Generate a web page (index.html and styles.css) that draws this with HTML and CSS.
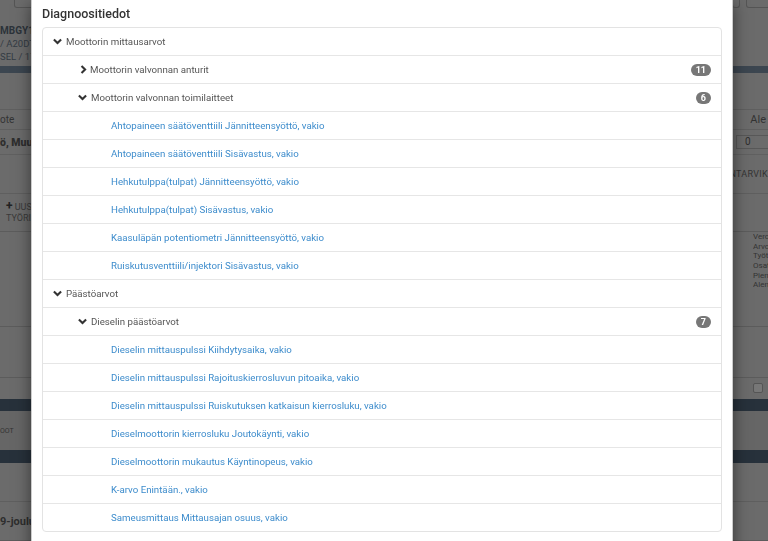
FILE: index.html
```html
<!DOCTYPE html>
<html lang="fi">
<head>
<meta charset="utf-8">
<title>Diagnoositiedot</title>
<link rel="stylesheet" href="styles.css">
</head>
<body>
<div class="page">
  <div class="prow r-top"><span class="box box-l"></span><span class="boxes"><span class="box box-r1"></span><span class="box box-r2"></span></span></div>
  <div class="prow r-info"><div class="info"><b>MBGY1A</b><span>/ A20DT</span><span>SEL / 173</span></div></div>
  <div class="band"></div>
  <div class="prow r-gap"></div>
  <div class="prow r-head"><span>ote</span><span class="rt">Ale</span></div>
  <div class="prow r-val"><b>ö, Muu</b><span class="inp">0</span></div>
  <div class="prow r-mid"><span></span><span class="rt2">NTARVIK</span></div>
  <div class="prow r-btn"><span class="btn"><b>+</b> UUS<br>TYÖRI</span><span></span></div>
  <div class="prow r-sum"><span></span><span class="sum">Vero<br>Arvo<br>Työt<br>Osat<br>Pien<br>Alen</span></div>
  <div class="prow r-emp"></div>
  <div class="prow r-chk"><span></span><span class="chk"></span></div>
  <div class="band band2"></div>
  <div class="prow r-oot"><span class="small">OOT</span></div>
  <div class="band band3"></div>
  <div class="prow r-emp2"></div>
  <div class="prow r-date"><b>9-joulu</b></div>
</div>

<div class="modal">
  <h4 class="title">Diagnoositiedot</h4>
  <ul class="tree">
    <li class="row lvl1"><span class="chev down"><svg viewBox="0 0 10 7" width="9" height="7"><path d="M1 1.2 L5 5.2 L9 1.2" fill="none" stroke="#333" stroke-width="2.3"/></svg></span>Moottorin mittausarvot</li>
    <li class="row lvl2"><span class="chev right"><svg viewBox="0 0 7 10" width="7" height="9"><path d="M1.3 1 L5.3 5 L1.3 9" fill="none" stroke="#333" stroke-width="2.3"/></svg></span>Moottorin valvonnan anturit<span class="badge">11</span></li>
    <li class="row lvl2"><span class="chev down"><svg viewBox="0 0 10 7" width="9" height="7"><path d="M1 1.2 L5 5.2 L9 1.2" fill="none" stroke="#333" stroke-width="2.3"/></svg></span>Moottorin valvonnan toimilaitteet<span class="badge">6</span></li>
    <li class="row lvl3"><a href="#">Ahtopaineen säätöventtiili Jännitteensyöttö, vakio</a></li>
    <li class="row lvl3"><a href="#">Ahtopaineen säätöventtiili Sisävastus, vakio</a></li>
    <li class="row lvl3"><a href="#">Hehkutulppa(tulpat) Jännitteensyöttö, vakio</a></li>
    <li class="row lvl3"><a href="#">Hehkutulppa(tulpat) Sisävastus, vakio</a></li>
    <li class="row lvl3"><a href="#">Kaasuläpän potentiometri Jännitteensyöttö, vakio</a></li>
    <li class="row lvl3"><a href="#">Ruiskutusventtiili/injektori Sisävastus, vakio</a></li>
    <li class="row lvl1"><span class="chev down"><svg viewBox="0 0 10 7" width="9" height="7"><path d="M1 1.2 L5 5.2 L9 1.2" fill="none" stroke="#333" stroke-width="2.3"/></svg></span>Päästöarvot</li>
    <li class="row lvl2"><span class="chev down"><svg viewBox="0 0 10 7" width="9" height="7"><path d="M1 1.2 L5 5.2 L9 1.2" fill="none" stroke="#333" stroke-width="2.3"/></svg></span>Dieselin päästöarvot<span class="badge">7</span></li>
    <li class="row lvl3"><a href="#">Dieselin mittauspulssi Kiihdytysaika, vakio</a></li>
    <li class="row lvl3"><a href="#">Dieselin mittauspulssi Rajoituskierrosluvun pitoaika, vakio</a></li>
    <li class="row lvl3"><a href="#">Dieselin mittauspulssi Ruiskutuksen katkaisun kierrosluku, vakio</a></li>
    <li class="row lvl3"><a href="#">Dieselmoottorin kierrosluku Joutokäynti, vakio</a></li>
    <li class="row lvl3"><a href="#">Dieselmoottorin mukautus Käyntinopeus, vakio</a></li>
    <li class="row lvl3"><a href="#">K-arvo Enintään., vakio</a></li>
    <li class="row lvl3"><a href="#">Sameusmittaus Mittausajan osuus, vakio</a></li>
  </ul>
</div>
</body>
</html>
```

FILE: styles.css
```css
html, body {
  margin: 0;
  padding: 0;
  height: 100%;
  overflow: hidden;
}
body {
  background: #6b6b6b;
  font-family: Roboto, "Liberation Sans", Arial, sans-serif;
  color: #2e2e2e;
}
.page {
  width: 768px;
  height: 541px;
  display: flex;
  flex-direction: column;
  overflow: hidden;
}
.prow {
  display: flex;
  justify-content: space-between;
  align-items: center;
  font-size: 10px;
  border-bottom: 1px solid #5f5f5f;
}
.rt { white-space: nowrap; margin-right: 0; }
.rt2 { white-space: nowrap; margin-right: 0; font-size: 9px; color: #333; letter-spacing: 0.3px; }
.r-top { height: 9px; align-items: flex-start; border-bottom: none; }
.box { display: block; border: 1px solid #555; border-top: none; border-radius: 0 0 3px 3px; height: 7px; }
.box-l { width: 18px; margin-left: 14px; }
.boxes { display: flex; gap: 6px; }
.box-r1 { width: 6px; }
.box-r2 { width: 22px; margin-right: -2px; }
.r-info { height: 57px; align-items: flex-start; border-bottom: none; }
.info { display: flex; flex-direction: column; line-height: 13px; padding-top: 15px; color: #333b44; font-size: 9.5px; }
.info b { font-size: 10px; color: #2c333a; }
.band {
  height: 7px;
  background: #3c4650 radial-gradient(#4d5862 0.5px, transparent 0.7px) 0 0 / 4px 4px;
  flex: none;
}
.r-gap { height: 37px; }
.r-head { height: 19px; font-size: 10px; color: #333; }
.r-head .rt { font-size: 11px; margin-right: 2px; }
.r-val { height: 24px; font-weight: bold; font-size: 10.5px; border-bottom: 1px solid #606060; }
.inp { border: 1px solid #585858; width: 30px; height: 12px; margin-right: -8px; font-weight: normal; font-size: 10px; padding-left: 8px; line-height: 12px; }
.r-mid { height: 38px; }
.r-btn { height: 37px; font-size: 9px; border-bottom: 1px solid #5c5c5c; }
.btn { line-height: 11px; margin-left: 6px; color: #3a3a3a; white-space: nowrap; }
.btn b { font-size: 12px; color: #222; }
.r-sum { height: 95px; align-items: flex-end; border-bottom: 1px solid #5c5c5c; }
.sum { font-size: 8px; line-height: 9.7px; padding-bottom: 36px; width: 15px; overflow: hidden; color: #333; white-space: nowrap; }
.r-emp { height: 50px; border-bottom: 1px solid #5c5c5c; }
.r-chk { height: 21px; border-bottom: none; }
.chk { width: 8px; height: 8px; border: 1px solid #555; border-radius: 2px; background: #777; margin-right: 5px; }
.band2 { height: 12px; background: #27313b radial-gradient(#3a444e 0.5px, transparent 0.7px) 0 0 / 4px 4px; }
.band3 { height: 13px; background: #27313b; }
.r-oot { height: 40px; background: #666; border-bottom: none; }
.small { font-size: 7px; color: #333; }
.r-emp2 { height: 38px; }
.r-date { height: 38px; font-size: 11px; border-bottom: 1px solid #5c5c5c; }

.modal {
  position: fixed;
  top: -1px;
  left: 31px;
  width: 680px;
  bottom: -10px;
  background: #fff;
  box-shadow: 0 5px 15px rgba(0, 0, 0, 0.5);
  border: 1px solid rgba(0, 0, 0, 0.2);
  padding: 6px 10px 0 10px;
}
.title {
  margin: 0 0 6px 0;
  font-size: 12.5px;
  line-height: 15px;
  font-weight: 500;
  color: #333;
}
.tree {
  list-style: none;
  margin: 0;
  padding: 0;
  border: 1px solid #e3e3e3;
  border-radius: 4px;
}
.row {
  display: flex;
  align-items: center;
  height: 27px;
  border-top: 1px solid #e6e6e6;
  font-size: 9.7px;
  color: #555;
  padding-right: 10px;
}
.row:first-child { border-top: none; }
.lvl1 { padding-left: 10px; }
.lvl2 { padding-left: 35px; }
.lvl3 { padding-left: 68px; }
.chev { display: inline-flex; width: 13px; align-items: center; }
.chev.right { padding-left: 2px; width: 10px; }
.row a { color: #3d8ccc; text-decoration: none; }
.badge {
  margin-left: auto;
  background: #777;
  color: #fff;
  font-size: 9px;
  font-weight: bold;
  line-height: 12px;
  padding: 0 5px;
  border-radius: 7px;
  min-width: 4px;
  text-align: center;
}
```
